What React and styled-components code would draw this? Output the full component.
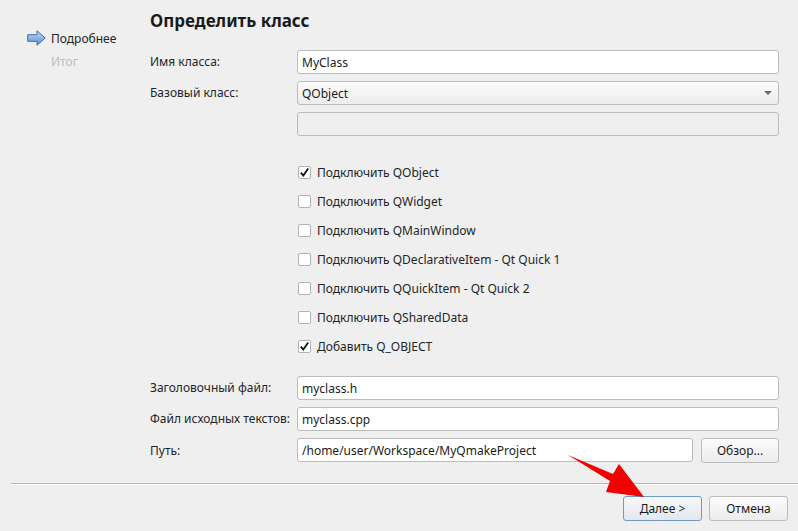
import styled, { createGlobalStyle } from 'styled-components';

const GlobalStyle = createGlobalStyle`
    html, body {
        margin: 0;
        padding: 0;
        background: #efefef;
    }
    body {
        font-family: 'Noto Sans', 'Open Sans', sans-serif;
        font-size: 12px;
        color: #232627;
    }
`;

const Window = styled.div`
    position: relative;
    width: 798px;
    height: 531px;
    display: flex;
    flex-direction: column;
    background: #efefef;
    overflow: hidden;
`;

const Body = styled.div`
    display: flex;
    flex: 1;
`;

const Sidebar = styled.div`
    width: 150px;
    padding-top: 29px;
    padding-left: 27px;
    box-sizing: border-box;
    display: flex;
    flex-direction: column;
    gap: 5px;
`;

const Step = styled.div`
    display: flex;
    align-items: center;
    gap: 5px;
    height: 18px;
    color: ${p => (p.$muted ? '#bdbdbd' : '#232627')};
    padding-left: ${p => (p.$muted ? '24px' : '0')};
`;

const Main = styled.div`
    flex: 1;
    padding-right: 19px;
    display: flex;
    flex-direction: column;
`;

const Title = styled.h1`
    margin: 0;
    padding-top: 9px;
    font-size: 17px;
    line-height: 24px;
    font-weight: 700;
    color: #1b1b1b;
`;

const Form = styled.div`
    display: grid;
    grid-template-columns: 147px 1fr;
    row-gap: 7px;
    align-items: center;
    margin-top: 17px;
`;

const Label = styled.div`
    line-height: 24px;
`;

const Field = styled.div`
    height: 24px;
    box-sizing: border-box;
    border: 1px solid #bcbcbc;
    border-radius: 3px;
    background: ${p => (p.$disabled ? '#efefef' : '#ffffff')};
    padding: 0 4px;
    display: flex;
    align-items: center;
    color: #1b1b1b;
`;

const Combo = styled(Field)`
    background: linear-gradient(#fbfbfb, #ececec);
    justify-content: space-between;
    padding-right: 6px;
`;

const Caret = styled.span`
    width: 0;
    height: 0;
    border-left: 4px solid transparent;
    border-right: 4px solid transparent;
    border-top: 4px solid #6a6a6a;
`;

const FieldRow = styled.div`
    display: flex;
    gap: 8px;
    & > ${Field} {
        flex: 1;
    }
`;

const Checks = styled.div`
    grid-column: 2;
    display: flex;
    flex-direction: column;
    margin-top: 15px;
    margin-bottom: 8px;
    padding-left: 1px;
`;

const CheckRow = styled.label`
    display: flex;
    align-items: center;
    gap: 6px;
    height: 29px;
`;

const Box = styled.span`
    width: 13px;
    height: 13px;
    box-sizing: border-box;
    border: 1px solid #b2b2b2;
    border-radius: 2px;
    background: #fff;
    display: flex;
    align-items: center;
    justify-content: center;
`;

const Button = styled.button`
    font-family: inherit;
    font-size: 12px;
    color: #1b1b1b;
    height: 25px;
    width: ${p => p.$width || '79px'};
    box-sizing: border-box;
    border: 1px solid ${p => (p.$default ? '#6f9bc4' : '#bcbcbc')};
    border-radius: 3px;
    background: ${p => (p.$default
        ? 'linear-gradient(#f6f8fa, #e3e8ed)'
        : 'linear-gradient(#fbfbfb, #ececec)')};
    padding: 0;
`;

const Separator = styled.div`
    margin: 20px 0 0 11px;
    height: 1px;
    background: #b4b4b4;
    border-bottom: 1px solid #ffffff;
`;

const Footer = styled.div`
    display: flex;
    justify-content: flex-end;
    gap: 7px;
    padding: 11px 10px 10px 0;
`;

const Overlay = styled.svg`
    position: absolute;
    left: 0;
    top: 0;
    pointer-events: none;
`;

function StepArrow() {
    return (
        <svg width="19" height="16" viewBox="0 0 19 16">
            <defs>
                <linearGradient id="sa" x1="0" y1="0" x2="0" y2="1">
                    <stop offset="0" stopColor="#c3dbf5" />
                    <stop offset="1" stopColor="#5a8ed6" />
                </linearGradient>
            </defs>
            <path d="M0.7 4.7 H10 V0.8 L18.2 8 L10 15.2 V11.3 H0.7 Z" fill="url(#sa)" stroke="#3f6fae" strokeWidth="1" strokeLinejoin="round" />
        </svg>
    );
}

function Tick() {
    return (
        <svg width="11" height="11" viewBox="0 0 11 11">
            <path d="M1.8 5.6 L4.3 8.6 L9.2 1.6" fill="none" stroke="#111" strokeWidth="1.8" />
        </svg>
    );
}

const options = [
    ['Подключить QObject', true],
    ['Подключить QWidget', false],
    ['Подключить QMainWindow', false],
    ['Подключить QDeclarativeItem - Qt Quick 1', false],
    ['Подключить QQuickItem - Qt Quick 2', false],
    ['Подключить QSharedData', false],
    ['Добавить Q_OBJECT', true],
];

export default function App() {
    return (
        <Window>
            <GlobalStyle />
            <Body>
                <Sidebar>
                    <Step><StepArrow />Подробнее</Step>
                    <Step $muted>Итог</Step>
                </Sidebar>
                <Main>
                    <Title>Определить класс</Title>
                    <Form>
                        <Label>Имя класса:</Label>
                        <Field>MyClass</Field>
                        <Label>Базовый класс:</Label>
                        <Combo>QObject<Caret /></Combo>
                        <span />
                        <Field $disabled />
                        <Checks>
                            {options.map(([text, checked]) => (
                                <CheckRow key={text}>
                                    <Box>{checked && <Tick />}</Box>
                                    {text}
                                </CheckRow>
                            ))}
                        </Checks>
                        <Label>Заголовочный файл:</Label>
                        <Field>myclass.h</Field>
                        <Label>Файл исходных текстов:</Label>
                        <Field>myclass.cpp</Field>
                        <Label>Путь:</Label>
                        <FieldRow>
                            <Field>/home/user/Workspace/MyQmakeProject</Field>
                            <Button $width="78px">Обзор...</Button>
                        </FieldRow>
                    </Form>
                </Main>
            </Body>
            <Separator />
            <Footer>
                <Button $default><u>Д</u>алее &gt;</Button>
                <Button>Отмена</Button>
            </Footer>
            <Overlay width="798" height="531" viewBox="0 0 798 531">
                <polygon points="568,455 613,474 619,464 644,497 606,492 610,481" fill="#f20000" />
            </Overlay>
        </Window>
    );
}
